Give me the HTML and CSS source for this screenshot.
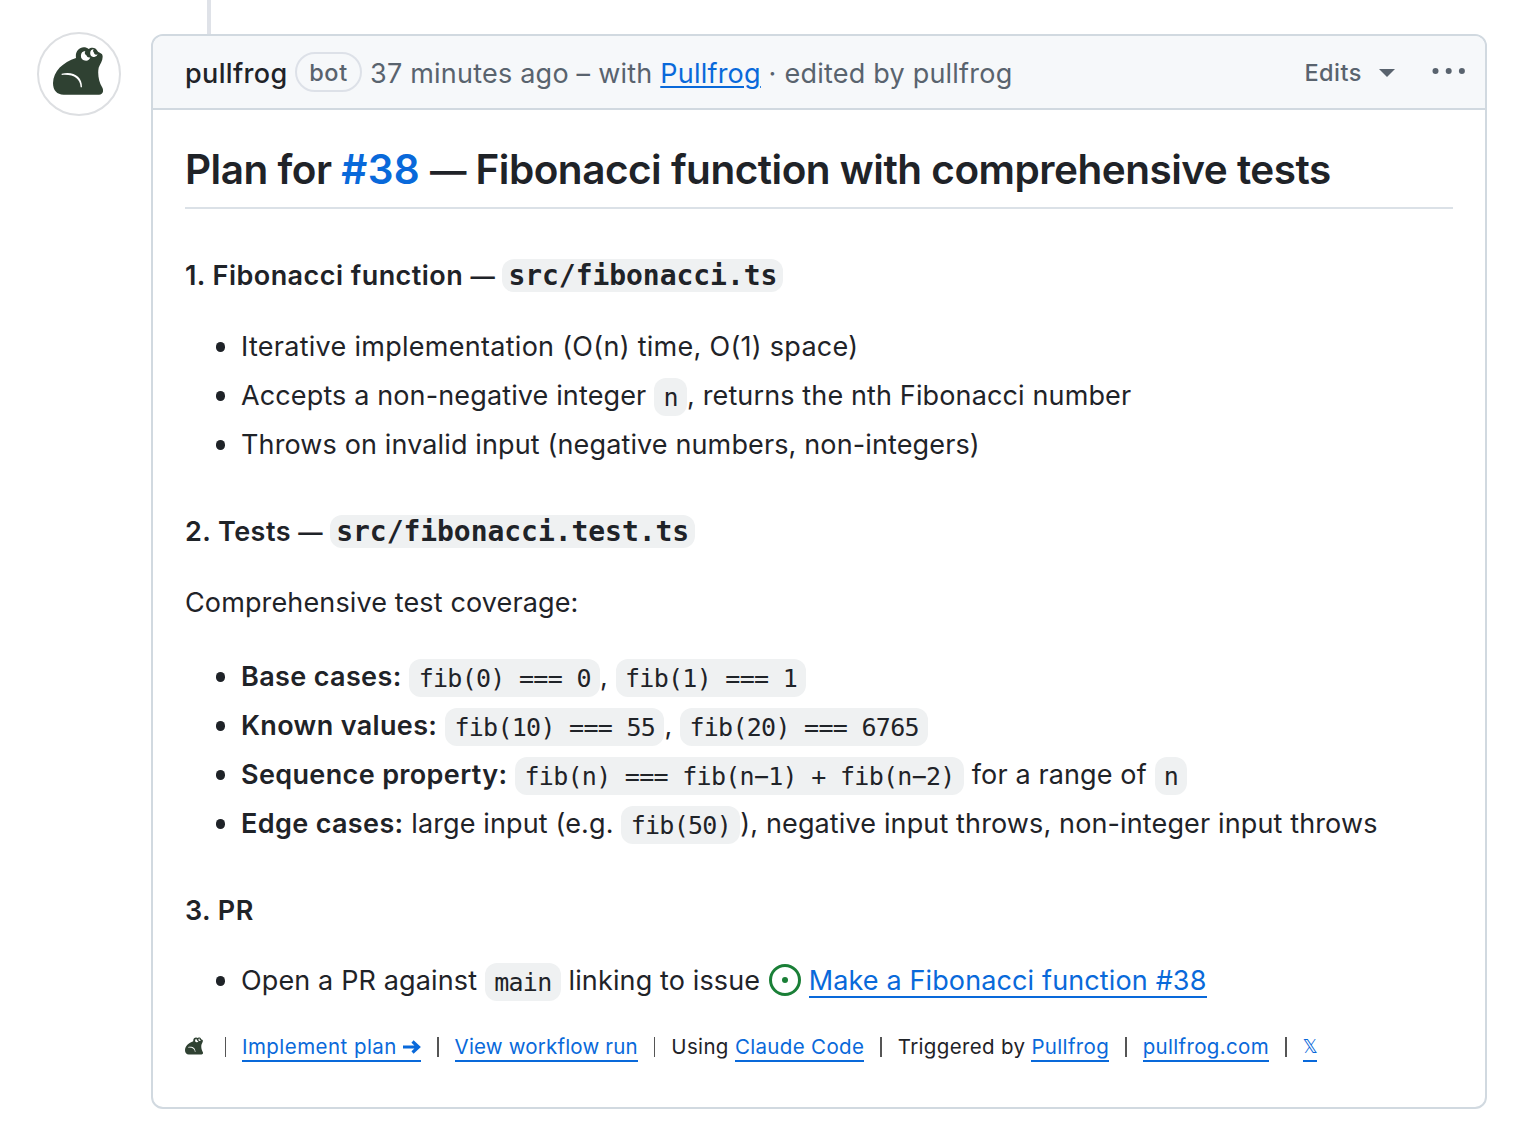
FILE: index.html
```html
<!DOCTYPE html>
<html lang="en">
<head>
    <meta charset="UTF-8">
    <meta name="viewport" content="width=device-width, initial-scale=1.0">
    <title>Plan for #38 - Fibonacci function with comprehensive tests</title>
    <link rel="stylesheet" href="styles.css">
</head>
<body>
    <svg width="0" height="0" class="sprite">
        <symbol id="frog" viewBox="0 0 150 144">
            <path fill="#2f4132" d="M32 143C12 143 0 130 0 108C1 72 30 46 69 33C66 14 78 1 92 1C98 1 103 3 107 6C115 0 128 0 134 13C138 19 149 17 149 29C149 41 141 51 137 62C133 82 138 106 147 120C154 132 149 143 138 143Z"/>
            <path fill="#fff" d="M26 80C61 72 88 88 87 121L83 121C81 94 62 81 26 84Z"/>
            <path fill="#fff" d="M97 12A14.500 14.500 0 1 0 112 31A10 10 0 0 1 100 25A10 10 0 0 1 97 12Z"/>
            <path fill="#fff" d="M122 7A11.500 11.500 0 1 0 134 22A7 7 0 0 1 123 17A7 7 0 0 1 122 7Z"/>
        </symbol>
    </svg>

    <div class="timeline">
        <div class="avatar">
            <svg class="avatar-frog"><use href="#frog"/></svg>
        </div>

        <div class="thread">
            <div class="thread-line"></div>
            <div class="comment">
                <header class="comment-header">
                    <span class="author">pullfrog</span>
                    <span class="label">bot</span>
                    <span class="meta">37 minutes ago – with <a href="#">Pullfrog</a> · edited by pullfrog</span>
                    <span class="edits">Edits</span>
                    <span class="caret"></span>
                    <svg class="kebab" width="34" height="8" viewBox="0 0 34 8" fill="#59636e">
                        <circle cx="3.5" cy="4" r="3"/>
                        <circle cx="16.7" cy="4" r="3"/>
                        <circle cx="29.9" cy="4" r="3"/>
                    </svg>
                </header>

                <div class="comment-body">
                    <h2>Plan for <a href="#">#38</a> <span class="dash">—</span> Fibonacci function with comprehensive tests</h2>

                    <h3>1. Fibonacci function <span class="dash">—</span> <code>src/fibonacci.ts</code></h3>
                    <ul>
                        <li class="wide">Iterative implementation (O(n) time, O(1) space)</li>
                        <li>Accepts a non-negative integer <code>n</code>, returns the nth Fibonacci number</li>
                        <li>Throws on invalid input (negative numbers, non-integers)</li>
                    </ul>

                    <h3>2. Tests <span class="dash">—</span> <code>src/fibonacci.test.ts</code></h3>
                    <p>Comprehensive test coverage:</p>
                    <ul>
                        <li><strong>Base cases:</strong> <code>fib(0) === 0</code>, <code>fib(1) === 1</code></li>
                        <li><strong>Known values:</strong> <code>fib(10) === 55</code>, <code>fib(20) === 6765</code></li>
                        <li><strong>Sequence property:</strong> <code>fib(n) === fib(n−1) + fib(n−2)</code> for a range of <code>n</code></li>
                        <li><strong>Edge cases:</strong> large input (e.g. <code>fib(50)</code>), negative input throws, non-integer input throws</li>
                    </ul>

                    <h3>3. PR</h3>
                    <ul>
                        <li>Open a PR against <code>main</code> linking to issue <svg class="issue-icon" viewBox="0 0 32 32"><circle cx="16" cy="16" r="14.5" fill="none" stroke="#1a7f37" stroke-width="3"/><circle cx="16" cy="16" r="3" fill="#1a7f37"/></svg> <a href="#">Make a Fibonacci function #38</a></li>
                    </ul>

                    <div class="links">
                        <svg class="small-frog"><use href="#frog"/></svg>
                        <span class="wide"><a href="#">Implement plan <svg class="arrow" viewBox="0 0 18 14"><path d="M0 7H15M9.500 1.500L15.500 7L9.500 12.500" fill="none" stroke="#0969da" stroke-width="3.200"/></svg></a></span>
                        <span class="narrow"><a href="#">View workflow run</a></span>
                        <span>Using <a href="#">Claude Code</a></span>
                        <span>Triggered by <a href="#">Pullfrog</a></span>
                        <span><a href="#">pullfrog.com</a></span>
                        <span><a href="#" class="x">𝕏</a></span>
                    </div>
                </div>
            </div>
        </div>
    </div>
</body>
</html>
```
FILE: styles.css
```css
* {
    margin: 0;
    padding: 0;
    box-sizing: border-box;
}

body {
    font-family: Inter, "Liberation Sans", "DejaVu Sans", sans-serif;
    font-size: 27px;
    line-height: 42px;
    letter-spacing: 0.13px;
    color: #1f2328;
    background: #fff;
}

a {
    color: #0969da;
}

.sprite {
    display: block;
}

.timeline {
    display: flex;
    padding: 0 31px 0 37px;
}

.avatar {
    display: flex;
    align-items: center;
    justify-content: center;
    width: 84px;
    height: 84px;
    margin: 32px 30px 0 0;
    border: 2px solid #dddfe2;
    border-radius: 50%;
}

.avatar-frog {
    width: 50px;
    height: 48px;
    margin-top: -6px;
    margin-left: -2px;
}

.thread {
    flex: 1;
}

.thread-line {
    width: 4px;
    height: 34px;
    margin-left: 56px;
    background: #dfe2e8;
}

.comment {
    height: 1075px;
    border: 2px solid #d1d9e0;
    border-radius: 12px;
    overflow: hidden;
}

.comment-header {
    display: flex;
    align-items: center;
    height: 74px;
    padding: 2px 19px 0 32px;
    color: #59636e;
    background: #f6f8fa;
    border-bottom: 2px solid #d1d9e0;
    white-space: nowrap;
}

.author {
    padding-top: 2px;
    color: #1f2328;
    font-weight: 500;
    letter-spacing: 0.35px;
    width: 110px;
}

.label {
    width: 67px;
    height: 40px;
    margin: -2px 8px 0 0;
    border: 2px solid #dde1e8;
    border-radius: 20px;
    font-size: 23.5px;
    font-weight: 500;
    line-height: 37px;
    letter-spacing: 0.6px;
    text-align: center;
}

.meta {
    padding-top: 2px;
    letter-spacing: 0.22px;
}

.meta a {
    text-underline-offset: 3px;
    text-decoration-thickness: 2px;
}

.edits {
    margin-left: auto;
    font-size: 23.5px;
    font-weight: 500;
    letter-spacing: 0.5px;
}

.caret {
    margin: 0 37px 0 17px;
    border: 8px solid transparent;
    border-top: 8px solid #59636e;
    border-bottom: 0;
}

.kebab {
    margin-top: -5px;
}

.comment-body {
    padding: 32px;
    white-space: nowrap;
}

h2 {
    padding-bottom: 9px;
    border-bottom: 2px solid #dbe1e7;
    font-size: 40.5px;
    font-weight: 600;
    line-height: 56px;
    letter-spacing: -0.5px;
}

h2 a {
    letter-spacing: 0.4px;
    text-decoration: none;
}

h3 {
    margin: 48px 0 31px;
    font-size: 27px;
    font-weight: 600;
    line-height: 36px;
    letter-spacing: 0.45px;
}

h2 + h3 {
    margin: 49px 0 32px;
}

.dash {
    font-size: 0.9em;
    line-height: 1;
}

ul {
    padding-left: 56px;
    list-style: none;
}

li {
    position: relative;
    height: 42px;
}

li + li {
    margin-top: 7px;
}

li::before {
    content: "";
    position: absolute;
    left: -25.5px;
    top: 16px;
    width: 9.5px;
    height: 9.5px;
    border-radius: 50%;
    background: #1f2328;
}

li.wide {
    letter-spacing: 0.28px;
}

p {
    padding-top: 1px;
}

p + ul {
    margin-top: 32px;
}

strong {
    font-weight: 600;
    letter-spacing: 0.36px;
}

code {
    padding: 4.5px 9.3px;
    border-radius: 12px;
    background: #eff1f2;
    font-family: "DejaVu Sans Mono", monospace;
    font-size: 25px;
    line-height: 1;
    letter-spacing: -0.71px;
}

h3 code {
    padding: 0 6px;
    font-size: 28px;
    font-weight: 700;
    letter-spacing: -0.05px;
}

li a,
.links a {
    text-decoration: none;
    box-shadow: 0 1px #0969da, inset 0 -1px #0969da;
}

.issue-icon {
    width: 32px;
    height: 32px;
    margin-left: 1px;
    vertical-align: -6px;
}

.links {
    display: flex;
    align-items: center;
    margin-top: 29px;
    font-size: 20.5px;
    line-height: 32px;
    letter-spacing: 0.34px;
}

.links span {
    display: flex;
    align-items: center;
    white-space: pre;
}

.links span::before {
    content: "";
    width: 1.5px;
    height: 20px;
    margin: 0 16px;
    background: #555;
}

.links .wide {
    letter-spacing: 0.45px;
}

.links .narrow {
    letter-spacing: 0.18px;
}

.links a {
    line-height: 28px;
}

.links .x {
    display: inline-block;
    width: 14px;
    height: 28px;
    font-size: 19px;
    letter-spacing: -1px;
}

.small-frog {
    width: 18px;
    height: 18px;
    margin-top: -2px;
    margin-right: 5.5px;
}

.arrow {
    width: 18px;
    height: 14px;
}
```
